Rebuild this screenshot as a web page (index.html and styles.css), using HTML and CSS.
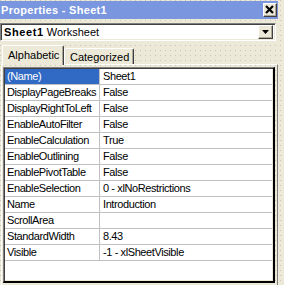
FILE: index.html
```html
<!DOCTYPE html>
<html>
<head>
<meta charset="utf-8">
<link rel="stylesheet" href="styles.css">
</head>
<body>
<div class="win">
  <div class="title">
    <span class="title-text">Properties - Sheet1</span>
    <span class="close"><svg width="12" height="12" viewBox="0 0 12 12"><path d="M2 2 L9 9 M9 2 L2 9" stroke="#000" stroke-width="2.2" fill="none"/></svg></span>
  </div>
  <div class="combo">
    <span class="combo-text"><b>Sheet1</b> Worksheet</span>
    <span class="dd"><svg width="7" height="4" viewBox="0 0 7 4"><path d="M0 0 H7 L3.5 4 Z" fill="#000"/></svg></span>
  </div>
  <div class="tabs">
    <div class="tab active">Alphabetic</div>
    <div class="tab">Categorized</div>
  </div>
  <div class="page">
    <div class="grid">
      <div class="row sel"><div class="k">(Name)</div><div class="v">Sheet1</div></div>
      <div class="row"><div class="k">DisplayPageBreaks</div><div class="v">False</div></div>
      <div class="row"><div class="k">DisplayRightToLeft</div><div class="v">False</div></div>
      <div class="row"><div class="k">EnableAutoFilter</div><div class="v">False</div></div>
      <div class="row"><div class="k">EnableCalculation</div><div class="v">True</div></div>
      <div class="row"><div class="k">EnableOutlining</div><div class="v">False</div></div>
      <div class="row"><div class="k">EnablePivotTable</div><div class="v">False</div></div>
      <div class="row"><div class="k">EnableSelection</div><div class="v">0 - xlNoRestrictions</div></div>
      <div class="row"><div class="k">Name</div><div class="v">Introduction</div></div>
      <div class="row"><div class="k">ScrollArea</div><div class="v"></div></div>
      <div class="row"><div class="k">StandardWidth</div><div class="v">8.43</div></div>
      <div class="row"><div class="k">Visible</div><div class="v">-1 - xlSheetVisible</div></div>
    </div>
  </div>
</div>
</body>
</html>
```
FILE: styles.css
```css
html, body {
  margin: 0;
  padding: 0;
}
body {
  width: 284px;
  height: 285px;
  overflow: hidden;
  background-color: #ece9d8;
  background-image: conic-gradient(at 1px 1px, transparent 75%, #c9c6b6 0);
  background-size: 5px 5px;
  font-family: "Liberation Sans", Arial, sans-serif;
  font-size: 11px;
  color: #000;
}
.win {
  padding-top: 1px;
}
.title {
  height: 18px;
  width: 278px;
  background: #7a96df;
  color: #fff;
  font-weight: bold;
  font-size: 11px;
  letter-spacing: 0.3px;
  display: flex;
  align-items: center;
  justify-content: space-between;
  padding-left: 1px;
  box-sizing: border-box;
}
.close {
  width: 14px;
  height: 14px;
  box-sizing: border-box;
  margin-right: 1px;
  background: #ece9d8;
  border-top: 1px solid #fff;
  border-left: 1px solid #fff;
  border-right: 1px solid #404040;
  border-bottom: 1px solid #404040;
  box-shadow: inset -1px -1px 0 #aca899;
  display: flex;
  align-items: center;
  justify-content: center;
}
.close svg { display: block; }
.combo {
  margin-top: 4px;
  height: 18px;
  width: 276px;
  box-sizing: border-box;
  background: #fff;
  border-top: 1px solid #808080;
  border-left: 1px solid #808080;
  border-right: 1px solid #fff;
  border-bottom: 1px solid #fff;
  box-shadow: inset 1px 1px 0 #404040, inset -1px -1px 0 #ece9d8;
  display: flex;
  align-items: center;
  justify-content: space-between;
  padding: 0 2px 0 3px;
}
.combo-text b {
  letter-spacing: 0.6px;
}
.dd {
  width: 15px;
  height: 14px;
  box-sizing: border-box;
  background: #ece9d8;
  border-top: 1px solid #fff;
  border-left: 1px solid #fff;
  border-right: 1px solid #404040;
  border-bottom: 1px solid #404040;
  box-shadow: inset -1px -1px 0 #aca899;
  display: flex;
  align-items: center;
  justify-content: center;
}
.dd svg { display: block; }
.tabs {
  margin-top: 4px;
  height: 19px;
  padding-left: 2px;
  display: flex;
  align-items: flex-end;
  position: relative;
  z-index: 1;
}
.tab {
  height: 16px;
  box-sizing: border-box;
  background: #ece9d8;
  border-top: 1px solid #fff;
  border-left: 1px solid #fff;
  border-right: 1px solid #404040;
  box-shadow: inset -1px 0 0 #aca899;
  border-radius: 2px 2px 0 0;
  padding: 1px 6px 0 5px;
  line-height: 14px;
}
.tab.active {
  height: 20px;
  margin-bottom: -1px;
  padding: 2px 3px 0 5px;
  width: 62px;
}
.tab:not(.active) {
  width: 70px;
  margin-bottom: 0;
  margin-left: 0;
}
.page {
  margin-left: 1px;
  width: 277px;
  height: 230px;
  box-sizing: border-box;
  border-top: 1px solid #fff;
  border-left: 1px solid #fff;
  border-right: 1px solid #808080;
  padding: 2px 0 0 1px;
}
.grid {
  width: 272px;
  height: 216px;
  box-sizing: border-box;
  background: #fff;
  border-top: 1px solid #808080;
  border-left: 1px solid #808080;
  border-right: 2px solid #000;
  border-bottom: 2px solid #000;
  box-shadow: inset 1px 1px 0 #404040, inset -1px -1px 0 #ece9d8;
  padding: 1px 1px 1px 1px;
}
.row {
  display: flex;
  height: 16px;
  box-sizing: border-box;
  border-bottom: 1px solid #c0c0c0;
  line-height: 15px;
  letter-spacing: -0.4px;
}
.k {
  width: 95px;
  box-sizing: border-box;
  border-right: 1px solid #c0c0c0;
  padding-left: 2px;
  white-space: nowrap;
  overflow: hidden;
}
.v {
  flex: 1;
  padding-left: 3px;
  white-space: nowrap;
  overflow: hidden;
}
.row.sel .k {
  background: #316ac5;
  color: #fff;
}
```
